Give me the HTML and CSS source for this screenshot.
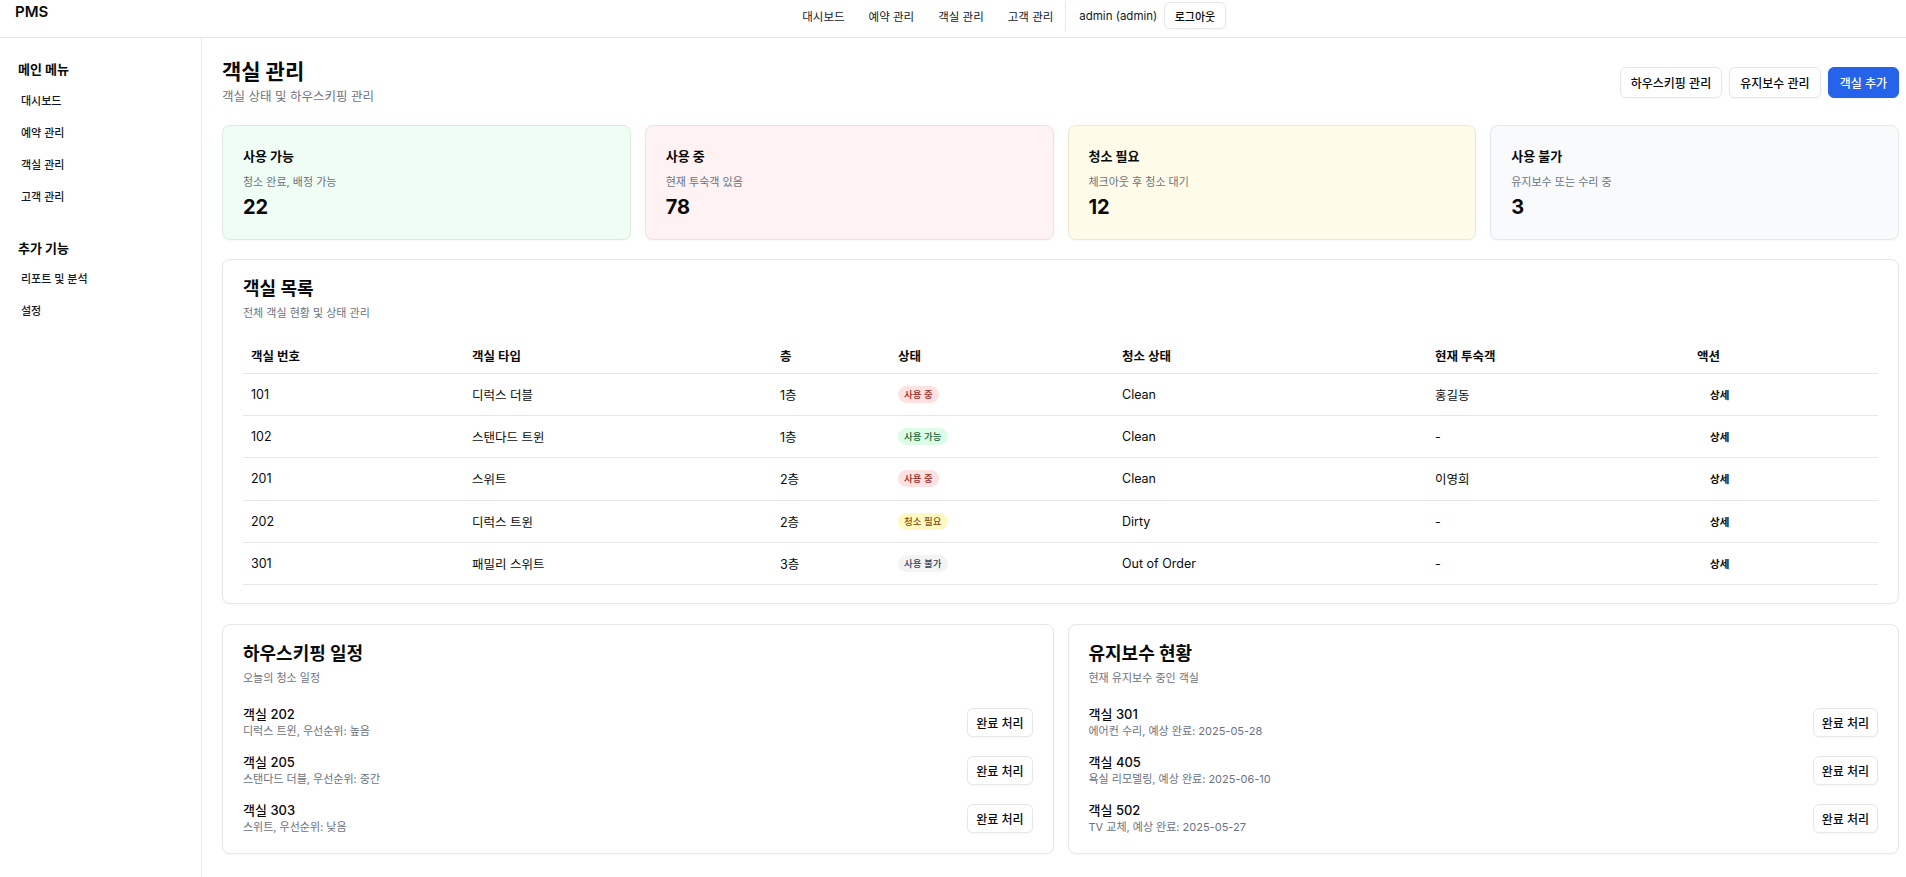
FILE: index.html
```html
<!DOCTYPE html>
<html lang="ko">
<head>
<meta charset="utf-8">
<title>PMS - 객실 관리</title>
<link rel="stylesheet" href="styles.css">
</head>
<body>
<header class="topbar">
  <div class="brand">PMS</div>
  <nav class="topnav">
    <a class="topnav-link" href="#">대시보드</a>
    <a class="topnav-link" href="#">예약 관리</a>
    <a class="topnav-link" href="#">객실 관리</a>
    <a class="topnav-link" href="#">고객 관리</a>
    <span class="topnav-divider"></span>
    <span class="topnav-user">admin (admin)</span>
    <button class="btn btn-logout">로그아웃</button>
  </nav>
</header>
<div class="layout">
  <aside class="sidebar">
    <h3 class="side-heading">메인 메뉴</h3>
    <ul class="side-list">
      <li class="side-item">대시보드</li>
      <li class="side-item">예약 관리</li>
      <li class="side-item">객실 관리</li>
      <li class="side-item">고객 관리</li>
    </ul>
    <h3 class="side-heading side-heading-2">추가 기능</h3>
    <ul class="side-list">
      <li class="side-item">리포트 및 분석</li>
      <li class="side-item">설정</li>
    </ul>
  </aside>
  <main class="main">
    <div class="page-head">
      <div>
        <h1 class="page-title">객실 관리</h1>
        <p class="page-sub">객실 상태 및 하우스키핑 관리</p>
      </div>
      <div class="page-actions">
        <button class="btn">하우스키핑 관리</button>
        <button class="btn">유지보수 관리</button>
        <button class="btn btn-primary">객실 추가</button>
      </div>
    </div>

    <section class="stats">
      <div class="stat stat-green">
        <div class="stat-title">사용 가능</div>
        <div class="stat-sub">청소 완료, 배정 가능</div>
        <div class="stat-num">22</div>
      </div>
      <div class="stat stat-red">
        <div class="stat-title">사용 중</div>
        <div class="stat-sub">현재 투숙객 있음</div>
        <div class="stat-num">78</div>
      </div>
      <div class="stat stat-yellow">
        <div class="stat-title">청소 필요</div>
        <div class="stat-sub">체크아웃 후 청소 대기</div>
        <div class="stat-num">12</div>
      </div>
      <div class="stat stat-gray">
        <div class="stat-title">사용 불가</div>
        <div class="stat-sub">유지보수 또는 수리 중</div>
        <div class="stat-num">3</div>
      </div>
    </section>

    <section class="card table-card">
      <h2 class="card-title">객실 목록</h2>
      <p class="card-sub">전체 객실 현황 및 상태 관리</p>
      <table class="rooms">
        <colgroup>
          <col class="c1"><col class="c2"><col class="c3"><col class="c4"><col class="c5"><col class="c6"><col>
        </colgroup>
        <thead>
          <tr><th>객실 번호</th><th>객실 타입</th><th>층</th><th>상태</th><th>청소 상태</th><th>현재 투숙객</th><th>액션</th></tr>
        </thead>
        <tbody>
          <tr><td>101</td><td>디럭스 더블</td><td>1층</td><td><span class="badge badge-red">사용 중</span></td><td>Clean</td><td>홍길동</td><td><button class="ghost">상세</button></td></tr>
          <tr><td>102</td><td>스탠다드 트윈</td><td>1층</td><td><span class="badge badge-green">사용 가능</span></td><td>Clean</td><td>-</td><td><button class="ghost">상세</button></td></tr>
          <tr><td>201</td><td>스위트</td><td>2층</td><td><span class="badge badge-red">사용 중</span></td><td>Clean</td><td>이영희</td><td><button class="ghost">상세</button></td></tr>
          <tr><td>202</td><td>디럭스 트윈</td><td>2층</td><td><span class="badge badge-yellow">청소 필요</span></td><td>Dirty</td><td>-</td><td><button class="ghost">상세</button></td></tr>
          <tr><td>301</td><td>패밀리 스위트</td><td>3층</td><td><span class="badge badge-gray">사용 불가</span></td><td>Out of Order</td><td>-</td><td><button class="ghost">상세</button></td></tr>
        </tbody>
      </table>
    </section>

    <section class="bottom-grid">
      <div class="card list-card">
        <h2 class="card-title">하우스키핑 일정</h2>
        <p class="card-sub">오늘의 청소 일정</p>
        <ul class="task-list">
          <li class="task"><div><div class="task-title">객실 202</div><div class="task-sub">디럭스 트윈, 우선순위: 높음</div></div><button class="btn btn-sm">완료 처리</button></li>
          <li class="task"><div><div class="task-title">객실 205</div><div class="task-sub">스탠다드 더블, 우선순위: 중간</div></div><button class="btn btn-sm">완료 처리</button></li>
          <li class="task"><div><div class="task-title">객실 303</div><div class="task-sub">스위트, 우선순위: 낮음</div></div><button class="btn btn-sm">완료 처리</button></li>
        </ul>
      </div>
      <div class="card list-card">
        <h2 class="card-title">유지보수 현황</h2>
        <p class="card-sub">현재 유지보수 중인 객실</p>
        <ul class="task-list">
          <li class="task"><div><div class="task-title">객실 301</div><div class="task-sub">에어컨 수리, 예상 완료: 2025-05-28</div></div><button class="btn btn-sm">완료 처리</button></li>
          <li class="task"><div><div class="task-title">객실 405</div><div class="task-sub">욕실 리모델링, 예상 완료: 2025-06-10</div></div><button class="btn btn-sm">완료 처리</button></li>
          <li class="task"><div><div class="task-title">객실 502</div><div class="task-sub">TV 교체, 예상 완료: 2025-05-27</div></div><button class="btn btn-sm">완료 처리</button></li>
        </ul>
      </div>
    </section>
  </main>
</div>
</body>
</html>
```
FILE: styles.css
```css
* { box-sizing: border-box; }
html, body { margin: 0; padding: 0; }
body {
  font-family: Inter, "Noto Sans CJK KR", sans-serif;
  color: #0a0a0a;
  background: #fff;
}
h1, h2, h3, p, ul { margin: 0; padding: 0; }
ul { list-style: none; }

/* top bar */
.topbar {
  display: flex;
  align-items: flex-start;
  height: 38px;
  border-bottom: 1px solid #e5e7eb;
  padding: 0 15px;
}
.brand {
  font-size: 15px;
  font-weight: 600;
  line-height: 16px;
  padding-top: 4px;
}
.topnav {
  display: flex;
  align-items: center;
  height: 31px;
  margin-left: 754px;
}
.topnav-link {
  font-size: 11.5px;
  color: #111827;
  text-decoration: none;
  margin-right: 24px;
}
.topnav-link:nth-child(4) { margin-right: 12px; }
.topnav-divider {
  width: 1px;
  height: 30px;
  background: #e5e7eb;
  margin-right: 13px;
}
.topnav-user {
  font-size: 11.5px;
  color: #111827;
  margin-right: 7px;
}

/* buttons */
.btn {
  font-family: inherit;
  font-size: 12px;
  font-weight: 500;
  height: 31px;
  padding: 0 10px;
  border: 1px solid #e5e7eb;
  background: #fff;
  color: #0a0a0a;
  border-radius: 6px;
  box-shadow: 0 1px 2px rgba(0,0,0,0.04);
  cursor: pointer;
}
.btn-primary {
  background: #2563eb;
  border-color: #2563eb;
  color: #fff;
  padding: 0 11px;
}
.btn-logout {
  height: 27px;
  padding: 0 9.5px;
  font-size: 11px;
}
.btn-sm {
  height: 29px;
  padding: 0 8px;
}

/* layout */
.layout {
  display: flex;
  min-height: calc(100vh - 38px);
}
.sidebar {
  width: 202px;
  flex-shrink: 0;
  border-right: 1px solid #e5e7eb;
  padding: 20px 16px 0 18px;
}
.side-heading {
  font-size: 13px;
  font-weight: 700;
  line-height: 22px;
  margin-bottom: 5px;
}
.side-heading-2 { margin-top: 24px; margin-bottom: 4px; }
.side-item {
  font-size: 11px;
  font-weight: 500;
  line-height: 32px;
  padding-left: 3px;
  color: #111827;
}

.main {
  flex: 1;
  min-width: 0;
  padding: 18px 7px 20px 20px;
}

.page-head {
  display: flex;
  justify-content: space-between;
  align-items: center;
  margin-bottom: 19px;
}
.page-title {
  font-size: 21px;
  font-weight: 700;
  line-height: 32px;
}
.page-sub {
  font-size: 12.5px;
  line-height: 18px;
  color: #6b7280;
}
.page-actions {
  display: flex;
  gap: 7px;
  margin-top: 2px;
}

/* stats */
.stats {
  display: grid;
  grid-template-columns: repeat(4, 1fr);
  gap: 14px;
  margin-bottom: 19px;
}
.stat {
  border: 1px solid #e5e7eb;
  border-radius: 8px;
  padding: 20px 20px 18px;
  box-shadow: 0 1px 2px rgba(0,0,0,0.04);
}
.stat-green { background: #f0fdf4; border-color: #dcebe0; }
.stat-red { background: #fef2f2; border-color: #f0e0e0; }
.stat-yellow { background: #fefce8; border-color: #ede9d4; }
.stat-gray { background: #f9fafb; border-color: #e5e7eb; }
.stat-title {
  font-size: 13px;
  font-weight: 700;
  line-height: 20px;
}
.stat-sub {
  font-size: 11px;
  line-height: 16px;
  color: #6b7280;
  margin-top: 8px;
}
.stat-num {
  font-size: 20px;
  font-weight: 700;
  line-height: 28px;
  margin-top: 3px;
}

/* cards */
.card {
  border: 1px solid #e5e7eb;
  border-radius: 8px;
  background: #fff;
  box-shadow: 0 1px 2px rgba(0,0,0,0.04);
}
.card-title {
  font-size: 18px;
  font-weight: 700;
  line-height: 28px;
}
.card-sub {
  font-size: 11px;
  line-height: 16px;
  color: #6b7280;
  margin-top: 2px;
}
.table-card {
  padding: 15px 20px 18px;
}

/* table */
.rooms {
  width: 100%;
  margin-top: 18px;
  border-collapse: collapse;
  table-layout: fixed;
}
.rooms .c1 { width: 221px; }
.rooms .c2 { width: 308px; }
.rooms .c3 { width: 118px; }
.rooms .c4 { width: 224px; }
.rooms .c5 { width: 313px; }
.rooms .c6 { width: 262px; }
.rooms th {
  text-align: left;
  font-size: 12.5px;
  font-weight: 700;
  height: 34px;
  padding: 0 8px;
  border-bottom: 1px solid #e5e7eb;
  vertical-align: middle;
}
.rooms td {
  font-size: 12.5px;
  height: 42.4px;
  padding: 0 8px;
  border-bottom: 1px solid #e5e7eb;
  vertical-align: middle;
  color: #0a0a0a;
}
.badge {
  display: inline-block;
  font-size: 9.5px;
  line-height: 17px;
  height: 17px;
  padding: 0 6px;
  border-radius: 9px;
  font-weight: 500;
}
.badge-red { background: #fee2e2; color: #991b1b; }
.badge-green { background: #dcfce7; color: #166534; }
.badge-yellow { background: #fef9c3; color: #854d0e; }
.badge-gray { background: #f3f4f6; color: #374151; }
.ghost {
  font-family: inherit;
  font-size: 10.5px;
  font-weight: 600;
  background: none;
  border: none;
  padding: 4px 13px;
  color: #0a0a0a;
  border-radius: 6px;
  cursor: pointer;
}

/* bottom */
.bottom-grid {
  display: grid;
  grid-template-columns: 1fr 1fr;
  gap: 14px;
  margin-top: 20px;
}
.list-card {
  padding: 15px 20px 18px;
}
.task-list {
  display: flex;
  flex-direction: column;
  gap: 14px;
  margin-top: 19px;
}
.task {
  display: flex;
  justify-content: space-between;
  align-items: center;
}
.task-title {
  font-size: 13px;
  font-weight: 500;
  line-height: 18px;
}
.task-sub {
  font-size: 11px;
  line-height: 16px;
  color: #6b7280;
}
```
